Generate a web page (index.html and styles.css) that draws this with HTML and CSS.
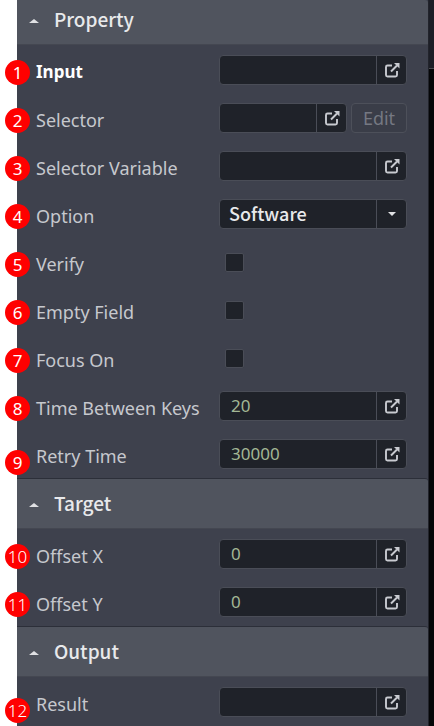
FILE: index.html
```
<!DOCTYPE html>
<html lang="en">
<head>
    <meta charset="UTF-8">
    <meta name="viewport" content="width=device-width, initial-scale=1.0">
    <title>Property</title>
    <link rel="stylesheet" href="styles.css">
</head>
<body>
    <svg class="symbols" aria-hidden="true">
        <symbol id="open" viewBox="0 0 16 16">
            <path d="M8 3.500H3.500Q2 3.500 2 5V13Q2 14.500 3.500 14.500H11.500Q13 14.500 13 13V9" fill="none" stroke="currentColor" stroke-width="1.900"/>
            <path d="M7 9.500L13 3.500" fill="none" stroke="currentColor" stroke-width="2"/>
            <path d="M10 1H15.500V6.500Z" fill="currentColor"/>
        </symbol>
    </svg>

    <div class="layout">
        <main class="panel">
            <section>
                <h2 class="first"><button type="button"><span class="arrow-up"></span>Property</button></h2>
                <div class="rows">
                    <div class="row">
                        <span class="badge">1</span>
                        <label class="required" for="input">Input</label>
                        <div class="field">
                            <input type="text" id="input">
                            <button type="button" aria-label="Open input"><svg><use href="#open"/></svg></button>
                        </div>
                    </div>
                    <div class="row">
                        <span class="badge">2</span>
                        <label for="selector">Selector</label>
                        <div class="field-group">
                            <div class="field">
                                <input type="text" id="selector">
                                <button type="button" aria-label="Open selector"><svg><use href="#open"/></svg></button>
                            </div>
                            <button type="button" class="edit-btn" disabled>Edit</button>
                        </div>
                    </div>
                    <div class="row">
                        <span class="badge">3</span>
                        <label for="selector-variable">Selector Variable</label>
                        <div class="field">
                            <input type="text" id="selector-variable">
                            <button type="button" aria-label="Open selector variable"><svg><use href="#open"/></svg></button>
                        </div>
                    </div>
                    <div class="row">
                        <span class="badge">4</span>
                        <label for="option">Option</label>
                        <div class="field dropdown">
                            <select id="option">
                                <option>Software</option>
                            </select>
                            <span class="arrow-cell"><span class="arrow-down"></span></span>
                        </div>
                    </div>
                    <div class="row">
                        <span class="badge">5</span>
                        <label for="verify">Verify</label>
                        <input type="checkbox" id="verify">
                    </div>
                    <div class="row">
                        <span class="badge">6</span>
                        <label for="empty-field">Empty Field</label>
                        <input type="checkbox" id="empty-field">
                    </div>
                    <div class="row">
                        <span class="badge">7</span>
                        <label for="focus-on">Focus On</label>
                        <input type="checkbox" id="focus-on">
                    </div>
                    <div class="row">
                        <span class="badge">8</span>
                        <label for="time-between-keys">Time Between Keys</label>
                        <div class="field">
                            <input type="text" id="time-between-keys" value="20">
                            <button type="button" aria-label="Open time between keys"><svg><use href="#open"/></svg></button>
                        </div>
                    </div>
                    <div class="row">
                        <span class="badge low">9</span>
                        <label for="retry-time">Retry Time</label>
                        <div class="field">
                            <input type="text" id="retry-time" value="30000">
                            <button type="button" aria-label="Open retry time"><svg><use href="#open"/></svg></button>
                        </div>
                    </div>
                </div>
            </section>

            <section>
                <h2><button type="button"><span class="arrow-up"></span>Target</button></h2>
                <div class="rows">
                    <div class="row">
                        <span class="badge wide">10</span>
                        <label for="offset-x">Offset X</label>
                        <div class="field">
                            <input type="text" id="offset-x" value="0">
                            <button type="button" aria-label="Open offset x"><svg><use href="#open"/></svg></button>
                        </div>
                    </div>
                    <div class="row">
                        <span class="badge wide">11</span>
                        <label for="offset-y">Offset Y</label>
                        <div class="field">
                            <input type="text" id="offset-y" value="0">
                            <button type="button" aria-label="Open offset y"><svg><use href="#open"/></svg></button>
                        </div>
                    </div>
                </div>
            </section>

            <section>
                <h2><button type="button"><span class="arrow-up"></span>Output</button></h2>
                <div class="rows">
                    <div class="row">
                        <span class="badge wide low">12</span>
                        <label for="result">Result</label>
                        <div class="field">
                            <input type="text" id="result">
                            <button type="button" aria-label="Open result"><svg><use href="#open"/></svg></button>
                        </div>
                    </div>
                </div>
            </section>
        </main>
        <div class="side">
            <div class="side-top"></div>
        </div>
    </div>
</body>
</html>
```
FILE: styles.css
```
* {
    box-sizing: border-box;
}
body {
    font-family: "Noto Sans", sans-serif;
    font-size: 17px;
    line-height: 24px;
    margin: 0;
    background-color: #fff;
    color: #c6c8cd;
}
button, input, select {
    font: inherit;
    color: inherit;
    margin: 0;
    padding: 0;
    border: 0;
    background: none;
}
.symbols {
    display: none;
}
.layout {
    display: flex;
    padding-left: 17px;
}
.panel {
    flex: 1;
    min-width: 0;
    background-color: #3e414d;
}

/* section headers */
h2 {
    margin: 0;
    height: 51px;
    padding-bottom: 2px;
    border-top: 1px solid #2c2f39;
    border-bottom: 1px solid #444751;
    border-top-right-radius: 3px;
    background-color: #50545e;
    font-family: "Noto Sans CJK KR", sans-serif;
    font-size: 19px;
    font-weight: 500;
    color: #e8e9eb;
}
h2.first {
    height: 45px;
    border-top: 0;
    padding-bottom: 6px;
}
h2 button {
    display: flex;
    align-items: center;
    gap: 15px;
    width: 100%;
    height: 100%;
    padding-left: 12px;
}
.arrow-up {
    margin-top: 4px;
    border: 5px solid transparent;
    border-top: 0;
    border-bottom: 4px solid #e0e1e4;
}
.arrow-down {
    border: 4px solid transparent;
    border-bottom: 0;
    border-top-color: #e0e1e4;
}

/* rows */
.rows {
    padding-top: 1px;
}
.row {
    position: relative;
    display: grid;
    grid-template-columns: 183px 1fr;
    align-items: center;
    height: 48px;
    padding: 0 21px 0 19px;
}
.row label {
    padding-top: 4px;
    font-size: 18px;
}
.row .required {
    font-size: 17px;
    font-weight: bold;
    color: #fff;
}
.badge {
    position: absolute;
    left: -12px;
    top: 14px;
    width: 25px;
    height: 25px;
    border-radius: 50%;
    background-color: #f00;
    color: #fff;
    line-height: 25px;
    text-align: center;
}
.badge.low {
    top: 20px;
}
.badge.wide {
    font-weight: 300;
}

/* controls */
.field {
    display: flex;
    flex: 1;
    min-width: 0;
    height: 30px;
    border: 1px solid #4a4d57;
    border-radius: 4px;
    background-color: #1f2229;
}
.field input {
    flex: 1;
    width: 0;
    padding-left: 11px;
    color: #a3b795;
}
.field button, .arrow-cell {
    display: flex;
    align-items: center;
    justify-content: center;
    width: 30px;
    border-left: 1px solid #4a4d57;
    color: #c8cad0;
}
.field svg {
    width: 16px;
    height: 16px;
}
.field-group {
    display: flex;
    gap: 4px;
}
.edit-btn {
    width: 56px;
    height: 30px;
    border: 1px solid #4d505a;
    border-radius: 4px;
    background-color: #3a3d48;
    color: #757882;
    font-size: 18px;
}
.dropdown {
    position: relative;
}
.dropdown select {
    flex: 1;
    padding: 0 9px 3px;
    appearance: none;
    font-family: "Noto Sans CJK KR", sans-serif;
    font-size: 18px;
    font-weight: 500;
    color: #e8e9eb;
}
.arrow-cell {
    position: absolute;
    top: 0;
    right: 0;
    height: 100%;
    pointer-events: none;
}
input[type="checkbox"] {
    appearance: none;
    width: 19px;
    height: 19px;
    margin-left: 6px;
    border: 1px solid #4a4d57;
    border-radius: 2px;
    background-color: #1f2229;
}

/* edge of the window behind the panel */
.side {
    width: 6px;
    border-left: 1px solid #22242c;
    background-color: #050608;
}
.side-top {
    height: 69px;
    border-bottom: 1px solid #4a4b50;
    background-color: #1c1e26;
}
```
